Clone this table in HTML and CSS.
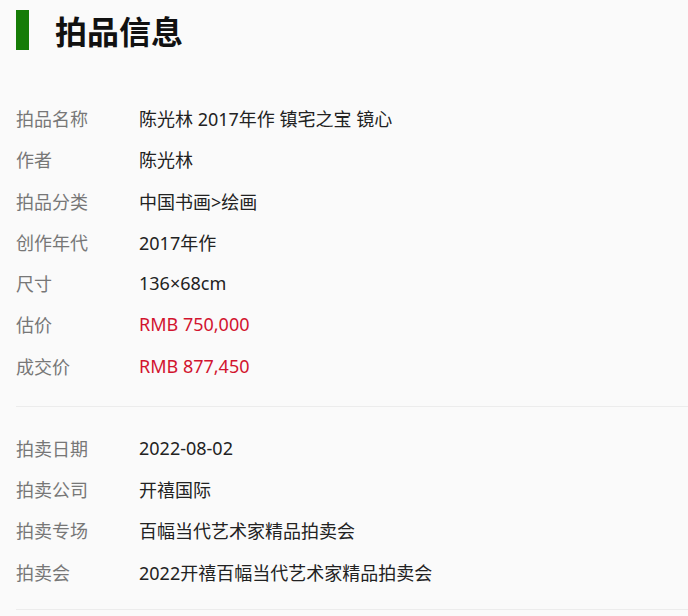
FILE: index.html
```html
<!DOCTYPE html>
<html lang="zh-CN">
<head>
    <meta charset="UTF-8">
    <meta name="viewport" content="width=device-width, initial-scale=1.0">
    <title>拍品信息</title>
    <link rel="stylesheet" href="styles.css">
</head>
<body>
    <div class="page">
        <div class="title">
            <span class="title-bar"></span>
            <h2>拍品信息</h2>
        </div>

        <div class="group group-first">
            <div class="row"><span class="label">拍品名称</span><span class="value">陈光林 2017年作 镇宅之宝 镜心</span></div>
            <div class="row"><span class="label">作者</span><span class="value">陈光林</span></div>
            <div class="row"><span class="label">拍品分类</span><span class="value">中国书画&gt;绘画</span></div>
            <div class="row"><span class="label">创作年代</span><span class="value">2017年作</span></div>
            <div class="row"><span class="label">尺寸</span><span class="value">136×68cm</span></div>
            <div class="row"><span class="label">估价</span><span class="value price">RMB 750,000</span></div>
            <div class="row"><span class="label">成交价</span><span class="value price">RMB 877,450</span></div>
        </div>

        <div class="group">
            <div class="row"><span class="label">拍卖日期</span><span class="value">2022-08-02</span></div>
            <div class="row"><span class="label">拍卖公司</span><span class="value">开禧国际</span></div>
            <div class="row"><span class="label">拍卖专场</span><span class="value">百幅当代艺术家精品拍卖会</span></div>
            <div class="row"><span class="label">拍卖会</span><span class="value">2022开禧百幅当代艺术家精品拍卖会</span></div>
        </div>
    </div>
</body>
</html>
```

FILE: styles.css
```css
body { margin: 0; background-color: #fafafa; font-family: "Noto Sans", "Noto Sans CJK SC", sans-serif; color: #222; }
.page { padding-left: 16px; }
.title { display: flex; align-items: center; gap: 26px; height: 60px; }
.title-bar { width: 13px; height: 40px; background-color: #167c07; }
.title h2 { margin: 0; font-size: 32px; font-weight: bold; color: #111; }
.group { padding: 20px 0 17px; border-bottom: 1px solid #ececec; }
.group-first { padding-top: 37.5px; padding-bottom: 20px; }
.row { display: flex; align-items: center; height: 41.25px; font-size: 18px; }
.label { width: 123px; color: #777; }
.value { color: #222; }
.price { color: #d2142f; }
```
